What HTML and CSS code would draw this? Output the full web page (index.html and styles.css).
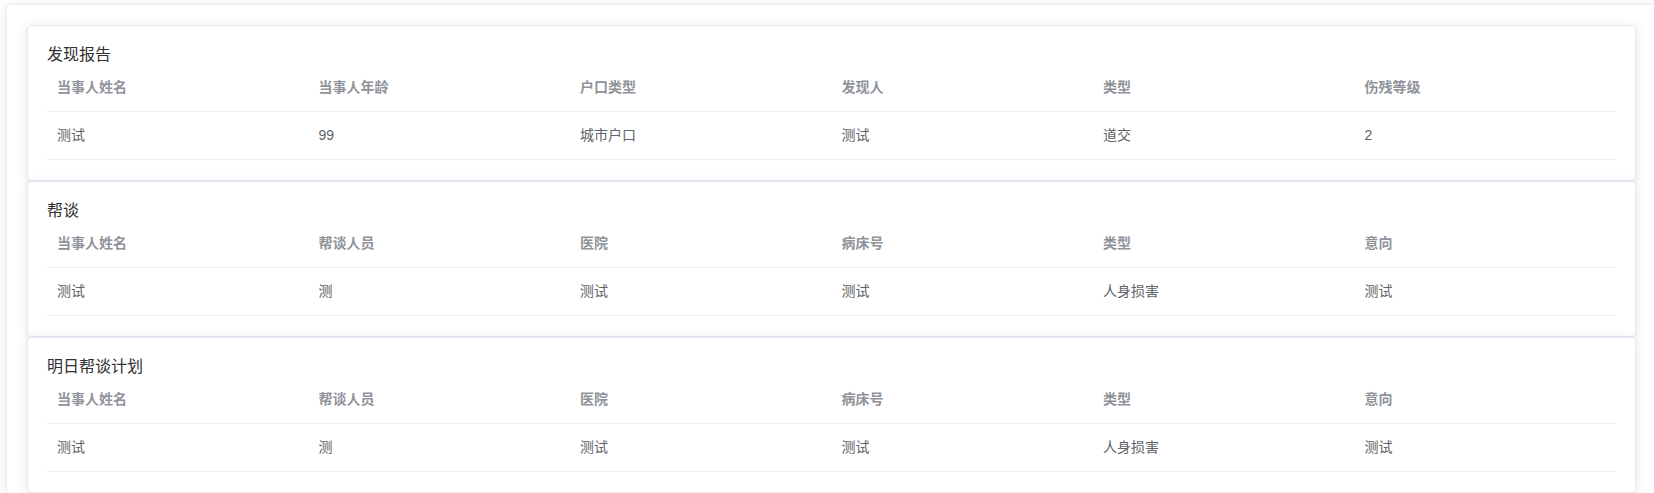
FILE: index.html
```html
<!DOCTYPE html>
<html lang="zh-CN">
<head>
<meta charset="utf-8">
<title>报告</title>
<link rel="stylesheet" href="styles.css">
</head>
<body>
<div class="outer">
  <div class="card">
    <div class="card-title">发现报告</div>
    <table class="tbl">
      <thead>
        <tr><th>当事人姓名</th><th>当事人年龄</th><th>户口类型</th><th>发现人</th><th>类型</th><th>伤残等级</th></tr>
      </thead>
      <tbody>
        <tr><td>测试</td><td>99</td><td>城市户口</td><td>测试</td><td>道交</td><td>2</td></tr>
      </tbody>
    </table>
  </div>
  <div class="card">
    <div class="card-title">帮谈</div>
    <table class="tbl">
      <thead>
        <tr><th>当事人姓名</th><th>帮谈人员</th><th>医院</th><th>病床号</th><th>类型</th><th>意向</th></tr>
      </thead>
      <tbody>
        <tr><td>测试</td><td>测</td><td>测试</td><td>测试</td><td>人身损害</td><td>测试</td></tr>
      </tbody>
    </table>
  </div>
  <div class="card">
    <div class="card-title">明日帮谈计划</div>
    <table class="tbl">
      <thead>
        <tr><th>当事人姓名</th><th>帮谈人员</th><th>医院</th><th>病床号</th><th>类型</th><th>意向</th></tr>
      </thead>
      <tbody>
        <tr><td>测试</td><td>测</td><td>测试</td><td>测试</td><td>人身损害</td><td>测试</td></tr>
      </tbody>
    </table>
  </div>
</div>
</body>
</html>
```

FILE: styles.css
```css
html, body {
  margin: 0;
  padding: 0;
  background: #ffffff;
  overflow: hidden;
}
body {
  font-family: "Liberation Sans", "Noto Sans CJK SC", sans-serif;
  font-size: 14px;
  color: #606266;
}
.outer {
  box-sizing: border-box;
  width: 1651px;
  margin: 4px 0 0 6px;
  padding: 20px 20px 0 20px;
  border: 1px solid #ebeef5;
  border-radius: 4px;
  background: #fff;
  box-shadow: 0 2px 12px 0 rgba(0, 0, 0, 0.1);
}
.card {
  box-sizing: border-box;
  width: 1609px;
  padding: 20px 19px 20px 19px;
  border: 1px solid #e6e8f1;
  border-radius: 4px;
  background: #fff;
  box-shadow: 0 2px 12px 0 rgba(0, 0, 0, 0.1);
}
.card-title {
  font-size: 16px;
  line-height: 18px;
  color: #303133;
}
.tbl {
  width: 100%;
  table-layout: fixed;
  border-collapse: collapse;
  border-spacing: 0;
}
.tbl th,
.tbl td {
  padding: 12px 10px;
  line-height: 23px;
  height: 23px;
  text-align: left;
  border-bottom: 1px solid #ebeef5;
  font-size: 14px;
  white-space: nowrap;
  overflow: hidden;
}
.tbl th {
  color: #909399;
  font-weight: bold;
}
.tbl td {
  color: #606266;
  font-weight: normal;
}
```
